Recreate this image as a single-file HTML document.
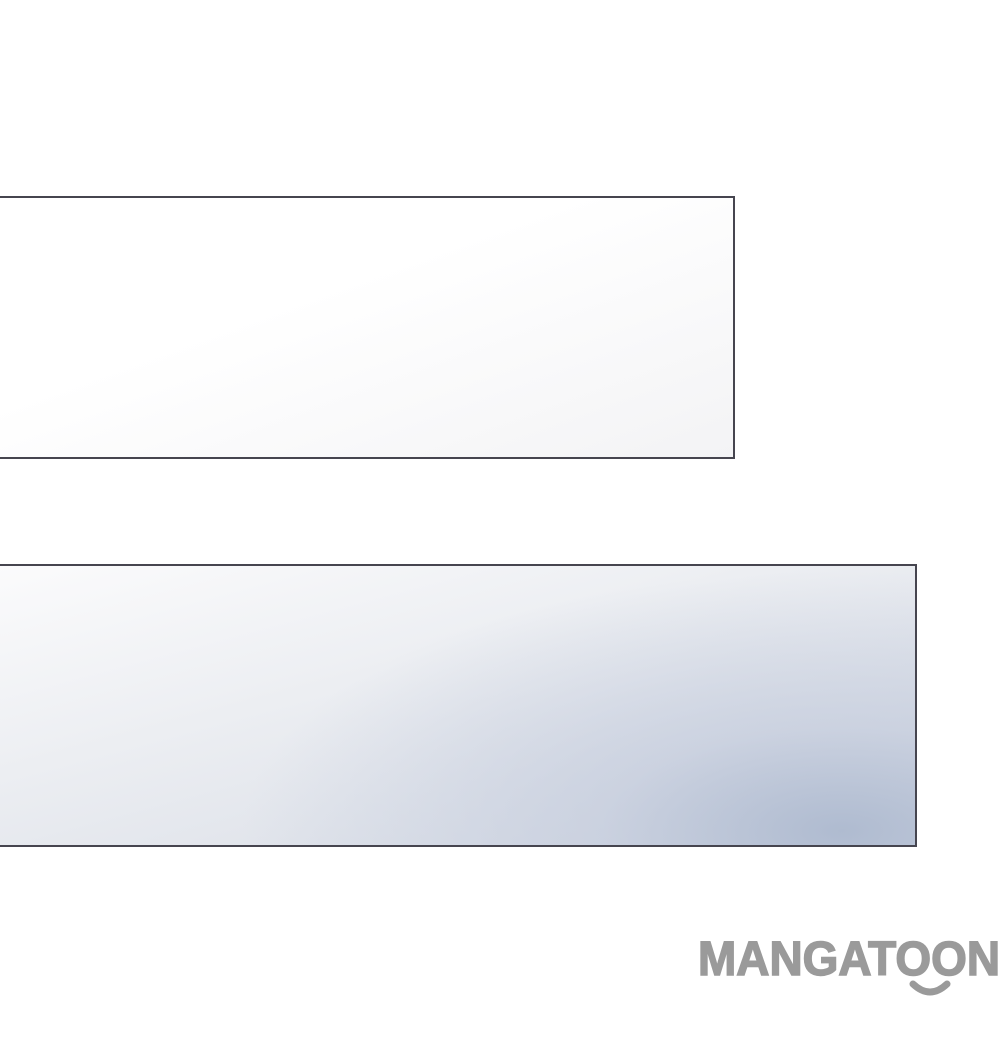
<!DOCTYPE html>
<html><head><style>
html,body{margin:0;padding:0;background:#fff;width:1000px;height:1050px;overflow:hidden;position:relative}
.b{position:absolute;box-sizing:border-box;border:2px solid #46454f}
</style></head><body>
<div class="b" style="left:-4px;top:196px;width:739px;height:263px;background:linear-gradient(160deg,#ffffff 40%,#f3f3f5 100%)"></div>
<div class="b" style="left:-4px;top:564px;width:921px;height:283px;background:radial-gradient(ellipse 600px 260px at 92% 95%,rgba(175,187,208,1) 0%,rgba(195,203,220,0.7) 40%,rgba(230,233,240,0) 100%),linear-gradient(165deg,#fbfbfc 0%,#eceef2 40%,#d5dae4 100%)"></div>
<svg style="position:absolute;left:0;top:0" width="1000" height="1050">
<text x="698" y="975" font-family="Liberation Sans, sans-serif" font-weight="bold" font-size="48" fill="#9a9a9a" stroke="#9a9a9a" stroke-width="1.5" textLength="302" lengthAdjust="spacingAndGlyphs">MANGATOON</text>
<path d="M913 984 Q930 1000 947 984" stroke="#9a9a9a" stroke-width="7" fill="none" stroke-linecap="round"/>
</svg>
</body></html>
